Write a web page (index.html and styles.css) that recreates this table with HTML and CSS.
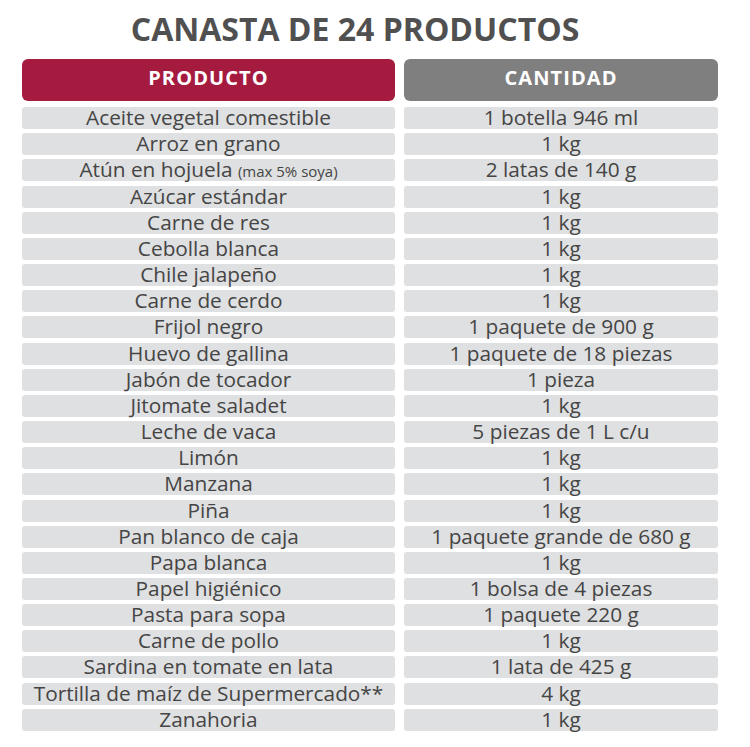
FILE: index.html
```html
<!DOCTYPE html>
<html lang="es">
<head>
<meta charset="utf-8">
<title>Canasta de 24 productos</title>
<link rel="stylesheet" href="styles.css">
</head>
<body>
<div class="page">
  <h1 class="title">CANASTA DE 24 PRODUCTOS</h1>
  <div class="table">
    <div class="head head-red">PRODUCTO</div>
    <div class="head head-gray">CANTIDAD</div>

    <div class="cell">Aceite vegetal comestible</div><div class="cell">1 botella 946 ml</div>
    <div class="cell">Arroz en grano</div><div class="cell">1 kg</div>
    <div class="cell">Atún en hojuela <span class="small">(max 5% soya)</span></div><div class="cell">2 latas de 140 g</div>
    <div class="cell">Azúcar estándar</div><div class="cell">1 kg</div>
    <div class="cell">Carne de res</div><div class="cell">1 kg</div>
    <div class="cell">Cebolla blanca</div><div class="cell">1 kg</div>
    <div class="cell">Chile jalapeño</div><div class="cell">1 kg</div>
    <div class="cell">Carne de cerdo</div><div class="cell">1 kg</div>
    <div class="cell">Frijol negro</div><div class="cell">1 paquete de 900 g</div>
    <div class="cell">Huevo de gallina</div><div class="cell">1 paquete de 18 piezas</div>
    <div class="cell">Jabón de tocador</div><div class="cell">1 pieza</div>
    <div class="cell">Jitomate saladet</div><div class="cell">1 kg</div>
    <div class="cell">Leche de vaca</div><div class="cell">5 piezas de 1 L c/u</div>
    <div class="cell">Limón</div><div class="cell">1 kg</div>
    <div class="cell">Manzana</div><div class="cell">1 kg</div>
    <div class="cell">Piña</div><div class="cell">1 kg</div>
    <div class="cell">Pan blanco de caja</div><div class="cell">1 paquete grande de 680 g</div>
    <div class="cell">Papa blanca</div><div class="cell">1 kg</div>
    <div class="cell">Papel higiénico</div><div class="cell">1 bolsa de 4 piezas</div>
    <div class="cell">Pasta para sopa</div><div class="cell">1 paquete 220 g</div>
    <div class="cell">Carne de pollo</div><div class="cell">1 kg</div>
    <div class="cell">Sardina en tomate en lata</div><div class="cell">1 lata de 425 g</div>
    <div class="cell">Tortilla de maíz de Supermercado**</div><div class="cell">4 kg</div>
    <div class="cell">Zanahoria</div><div class="cell">1 kg</div>
  </div>
</div>
</body>
</html>
```

FILE: styles.css
```css
* { box-sizing: border-box; }
html, body { margin: 0; padding: 0; background: #ffffff; }
body {
  font-family: "Open Sans", "Noto Sans", sans-serif;
  color: #444444;
  width: 750px;
  height: 747px;
  overflow: hidden;
}
.page {
  padding: 7px 0 0 22px;
}
.title {
  margin: 0;
  width: 666px;
  text-align: center;
  font-size: 32px;
  line-height: 44px;
  font-weight: 700;
  color: #505050;
  letter-spacing: 0;
}
.table {
  margin-top: 8px;
  display: grid;
  grid-template-columns: 373px 314px;
  column-gap: 9px;
  row-gap: 4.17px;
}
.head {
  height: 42px;
  padding-bottom: 6px;
  border-radius: 6px;
  color: #ffffff;
  font-weight: 700;
  font-size: 20px;
  letter-spacing: 1.1px;
  display: flex;
  align-items: center;
  justify-content: center;
  margin-bottom: 2px;
}
.head-red { background: #a41b3f; }
.head-gray { background: #7f7f7f; }
.cell {
  height: 22px;
  background: #dfe0e1;
  border-radius: 3px;
  font-size: 20.8px;
  line-height: 20px;
  text-align: center;
  white-space: nowrap;
  color: #454545;
}
.small { font-size: 15px; }
```
